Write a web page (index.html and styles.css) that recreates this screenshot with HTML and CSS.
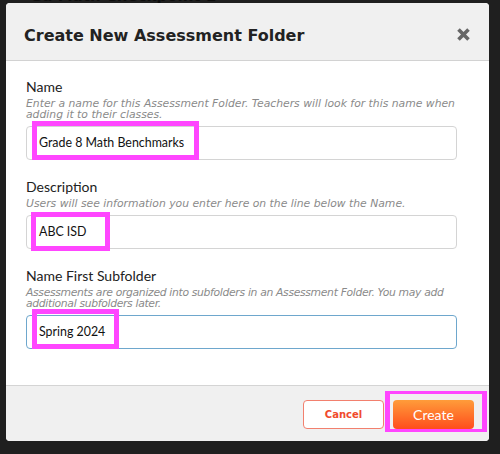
FILE: index.html
```html
<!DOCTYPE html>
<html>
<head>
<meta charset="utf-8">
<link rel="stylesheet" href="styles.css">
</head>
<body>
<div class="page-behind">Ga Math Checkpoint 1 -</div>
<div class="modal">
  <div class="modal-header">
    <h2 class="modal-title">Create New Assessment Folder</h2>
    <svg class="close" width="15" height="13" viewBox="0 0 15 13"><path d="M2.5 1.5 L12.5 11.5 M12.5 1.5 L2.5 11.5" stroke="#666" stroke-width="3.6" stroke-linecap="butt"/></svg>
  </div>
  <div class="modal-body">
    <div class="field">
      <div class="label">Name</div>
      <div class="hint">Enter a name for this Assessment Folder. Teachers will look for this name when<br>adding it to their classes.</div>
      <div class="input-wrap">
        <div class="input">Grade 8 Math Benchmarks</div>
        <div class="hl hl-1"></div>
      </div>
    </div>
    <div class="field">
      <div class="label">Description</div>
      <div class="hint">Users will see information you enter here on the line below the Name.</div>
      <div class="input-wrap">
        <div class="input">ABC ISD</div>
        <div class="hl hl-2"></div>
      </div>
    </div>
    <div class="field">
      <div class="label">Name First Subfolder</div>
      <div class="hint hint-tight">Assessments are organized into subfolders in an Assessment Folder. You may add<br>additional subfolders later.</div>
      <div class="input-wrap">
        <div class="input input-focus">Spring 2024</div>
        <div class="hl hl-3"></div>
      </div>
    </div>
  </div>
  <div class="modal-footer">
    <div class="btn btn-cancel">Cancel</div>
    <div class="btn-wrap">
      <div class="btn btn-create">Create</div>
      <div class="hl hl-4"></div>
    </div>
  </div>
</div>
</body>
</html>
```
FILE: styles.css
```css
html, body {
  margin: 0;
  padding: 0;
}
body {
  width: 500px;
  height: 454px;
  overflow: hidden;
  background: #1f1f1f;
  position: relative;
}
.page-behind {
  margin-top: -12px;
  padding-left: 30px;
  font: bold 15px/16px "DejaVu Sans", sans-serif;
  color: #0c0c0c;
}
.modal {
  position: absolute;
  left: 6px;
  top: 3px;
  width: 483px;
  height: 438px;
  border-radius: 4px;
  overflow: hidden;
  background: #fff;
  display: flex;
  flex-direction: column;
}
.modal-header {
  height: 57px;
  background: #f0f0f0;
  border-bottom: 1px solid #d2d2d2;
  display: flex;
  justify-content: space-between;
  align-items: flex-start;
  padding: 0 18px;
}
.modal-title {
  margin: 23px 0 0;
  font: bold 16px/20px "DejaVu Sans", Verdana, sans-serif;
  color: #222;
}
.close {
  margin-top: 25px;
  display: block;
}
.modal-body {
  height: 324px;
  box-sizing: border-box;
  padding: 17px 32px 0 20px;
  background: #fff;
}
.field {
  margin-bottom: 18px;
}
.label {
  font: 14px/17px Lato, sans-serif;
  color: #222;
  margin-bottom: 3px;
}
.hint {
  font: italic 10.8px/11px "DejaVu Sans", Verdana, sans-serif;
  color: #8a8a8a;
  margin-bottom: 6px;
  margin-right: -30px;
  white-space: nowrap;
}
.hint-tight {
  letter-spacing: -0.33px;
}
.input-wrap {
  position: relative;
}
.input {
  height: 34px;
  box-sizing: border-box;
  border: 1px solid #d4d4d4;
  border-radius: 4px;
  padding: 0 12px;
  font: 12.4px/32px Lato, sans-serif;
  color: #111;
}
.input-focus {
  border-color: #6ea7cd;
}
.hl {
  position: absolute;
  box-sizing: border-box;
  border: 5px solid #ff46ff;
}
.hl-1 {
  left: 6px;
  top: -5px;
  width: 167px;
  height: 39px;
}
.hl-2 {
  left: 5px;
  top: -3px;
  width: 79px;
  height: 39px;
}
.hl-3 {
  left: 6px;
  top: -6px;
  width: 87px;
  height: 40px;
}
.modal-footer {
  flex: 1;
  background: #f0f0f0;
  border-top: 1px solid #d4d4d4;
  display: flex;
  justify-content: flex-end;
  align-items: flex-start;
  gap: 9px;
  padding: 14px 15px 0 0;
}
.btn {
  width: 81px;
  height: 29px;
  box-sizing: border-box;
  border-radius: 4px;
  text-align: center;
}
.btn-cancel {
  background: #fff;
  border: 1px solid #f2806e;
  color: #f04a2c;
  font: bold 10px/27px "DejaVu Sans", Verdana, sans-serif;
}
.btn-wrap {
  position: relative;
}
.btn-create {
  background: linear-gradient(#ff9c3a, #ff4d1c);
  color: #fff;
  font: 14px/29px Lato, sans-serif;
}
.hl-4 {
  left: -8px;
  top: -9px;
  width: 102px;
  height: 41px;
  border-width: 3px 5px;
}
```
